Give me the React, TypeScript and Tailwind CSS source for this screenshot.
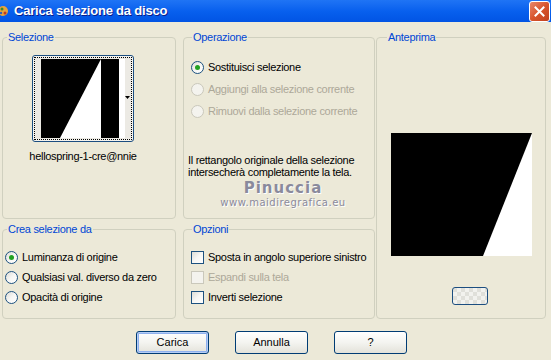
import React from "react";

const font = { fontFamily: '"Liberation Sans", Arial, sans-serif' };

function Radio({ checked, disabled }: { checked?: boolean; disabled?: boolean }) {
  return (
    <span
      className={
        "flex h-[13px] w-[13px] shrink-0 items-center justify-center rounded-full border " +
        (disabled
          ? "border-[#CAC8BB] bg-[#F4F3EE]"
          : "border-[#1C5180] bg-gradient-to-br from-[#DCDCD6] via-[#F6F6F4] to-white")
      }
    >
      {checked && <span className="h-[5px] w-[5px] rounded-full bg-[#21A121]" />}
    </span>
  );
}

function Check({ disabled }: { disabled?: boolean }) {
  return (
    <span
      className={
        "h-[13px] w-[13px] shrink-0 border " +
        (disabled
          ? "border-[#CAC8BB] bg-[#F4F3EE]"
          : "border-[#1C5180] bg-gradient-to-br from-[#DCDCD6] via-[#F6F6F4] to-white")
      }
    />
  );
}

function Group({
  title,
  className,
  children,
  legendOffset = "ml-[7px]",
}: {
  title: string;
  className: string;
  children?: React.ReactNode;
  legendOffset?: string;
}) {
  return (
    <fieldset className={"min-w-0 shrink-0 rounded-[4px] border border-[#D0D0BF] " + className}>
      <legend className={"px-[1px] text-[11px] leading-[13px] text-[#0046D5] " + legendOffset}>{title}</legend>
      {children}
    </fieldset>
  );
}

function XpButton({ label, primary }: { label: string; primary?: boolean }) {
  return (
    <button
      className={
        "flex h-[23px] w-[73px] items-center justify-center rounded-[3px] border border-[#003C74] bg-gradient-to-b from-white via-[#F4F4F0] to-[#E3E2DA] text-[11px] text-black " +
        (primary ? "shadow-[inset_0_0_0_1px_#B5CDF5,inset_0_0_0_2px_#8EB0EE]" : "")
      }
    >
      {label}
    </button>
  );
}

export default function App() {
  return (
    <div className="flex h-[360px] w-[551px] flex-col overflow-hidden bg-[#ECE9D8]" style={font}>
      {/* barra del titolo */}
      <div className="flex h-[22px] shrink-0 items-center bg-gradient-to-b from-[#1F74F5] via-[#0860EE] to-[#0254E4]">
        <svg width="12" height="16" viewBox="0 0 12 16" className="-ml-[2px] mr-[4px]">
          <circle cx="5" cy="8" r="5" fill="#E8A33C" />
          <circle cx="4" cy="6" r="1.5" fill="#3C8A2E" />
          <circle cx="7" cy="10" r="1.5" fill="#C23B22" />
          <circle cx="3" cy="10" r="1.2" fill="#2F5FB8" />
        </svg>
        <span className="text-[13px] font-bold tracking-[-0.2px] text-white [text-shadow:1px_1px_#0A1E8C]">Carica selezione da disco</span>
        <div className="ml-auto mr-[1px] flex h-[21px] w-[21px] items-center justify-center rounded-[3px] border border-white bg-gradient-to-br from-[#E8876A] via-[#D8542B] to-[#C1401E]">
          <svg width="11" height="11" viewBox="0 0 11 11">
            <path d="M1.5 1.5 L9.5 9.5 M9.5 1.5 L1.5 9.5" stroke="white" strokeWidth="2" strokeLinecap="square" />
          </svg>
        </div>
      </div>

      <div className="flex gap-[1px] pl-[2px] pt-[9px] tracking-[-0.3px]">
        <div className="flex flex-col gap-[4px]">
          <div className="flex gap-[7px]">
            <Group title="Selezione" className="h-[188px] w-[174px]" legendOffset="ml-[4px]">
              <div className="ml-[29px] mt-[11px] flex w-[102px] flex-col items-center">
                <div className="flex h-[87px] w-[102px] items-center justify-center rounded-[3px] border border-[#1C4E80] bg-[#F4F3EE]">
                  <div className="flex h-[83px] w-[98px] border border-dotted border-black">
                    <svg width="96" height="81" viewBox="0 0 96 81">
                      <rect x="0" y="0" width="96" height="81" fill="#ECEAE4" />
                      <rect x="6" y="1" width="78" height="79" fill="black" />
                      <polygon points="66,1 25,80 66,80" fill="white" />
                      <rect x="84" y="1" width="6" height="79" fill="white" />
                      <polygon points="90,38 95,38 92.5,41" fill="black" />
                    </svg>
                  </div>
                </div>
                <div className="mt-[8px] whitespace-nowrap text-[11px] leading-[13px] text-black">hellospring-1-cre@nnie</div>
              </div>
            </Group>

            <Group title="Operazione" className="h-[188px] w-[192px]" legendOffset="ml-[8px]">
              <div className="mt-[12px] flex flex-col whitespace-nowrap pl-[7px] text-[11px]">
                <label className="flex h-[22px] items-center gap-[4px] text-black">
                  <Radio checked />
                  Sostituisci selezione
                </label>
                <label className="flex h-[22px] items-center gap-[4px] text-[#ACA899]">
                  <Radio disabled />
                  Aggiungi alla selezione corrente
                </label>
                <label className="flex h-[22px] items-center gap-[4px] text-[#ACA899]">
                  <Radio disabled />
                  Rimuovi dalla selezione corrente
                </label>
              </div>
              <p className="ml-[4px] mt-[32px] text-[11px] leading-[12px] text-black">
                Il rettangolo originale della selezione
                <br />
                intersecherà completamente la tela.
              </p>
              <div className="mt-[1px] flex flex-col items-center pl-[8px] text-[#8A8A9C] [text-shadow:1px_1px_#ffffff]">
                <span className="text-[15px] font-bold leading-[18px] tracking-[1px]" style={{ fontFamily: '"DejaVu Sans", sans-serif' }}>
                  Pinuccia
                </span>
                <span className="text-[10px] leading-[12px] tracking-[0.5px]" style={{ fontFamily: '"DejaVu Sans", sans-serif' }}>
                  www.maidiregrafica.eu
                </span>
              </div>
            </Group>
          </div>

          <div className="flex gap-[7px]">
            <Group title="Crea selezione da" className="h-[96px] w-[174px]" legendOffset="ml-[4px]">
              <div className="mt-[11px] flex flex-col whitespace-nowrap pl-[2px] text-[11px] text-black">
                <label className="flex h-[20px] items-center gap-[4px]">
                  <Radio checked />
                  Luminanza di origine
                </label>
                <label className="flex h-[20px] items-center gap-[4px]">
                  <Radio />
                  Qualsiasi val. diverso da zero
                </label>
                <label className="flex h-[20px] items-center gap-[4px]">
                  <Radio />
                  Opacità di origine
                </label>
              </div>
            </Group>

            <Group title="Opzioni" className="h-[96px] w-[192px]" legendOffset="ml-[8px]">
              <div className="mt-[11px] flex flex-col whitespace-nowrap pl-[7px] text-[11px]">
                <label className="flex h-[20px] items-center gap-[4px] text-black">
                  <Check />
                  Sposta in angolo superiore sinistro
                </label>
                <label className="flex h-[20px] items-center gap-[4px] text-[#ACA899]">
                  <Check disabled />
                  Espandi sulla tela
                </label>
                <label className="flex h-[20px] items-center gap-[4px] text-black">
                  <Check />
                  Inverti selezione
                </label>
              </div>
            </Group>
          </div>
        </div>

        <Group title="Anteprima" className="h-[288px] w-[170px]" legendOffset="ml-[10px]">
          <div className="ml-[14px] mt-[89px]">
            <svg width="141" height="123" viewBox="0 0 141 123">
              <rect width="141" height="123" fill="black" />
              <polygon points="141,0 141,123 92,123" fill="white" />
            </svg>
          </div>
          <div className="ml-[75px] mt-[31px] h-[18px] w-[36px] rounded-[3px] border border-[#1C4E80] bg-[conic-gradient(#F2F2EE_25%,#E0E0DA_0_50%,#F2F2EE_0_75%,#E0E0DA_0)] bg-[length:8px_8px]" />
        </Group>
      </div>

      <div className="mt-[12px] flex gap-[26px] pl-[136px]">
        <XpButton label="Carica" primary />
        <XpButton label="Annulla" />
        <XpButton label="?" />
      </div>
    </div>
  );
}
